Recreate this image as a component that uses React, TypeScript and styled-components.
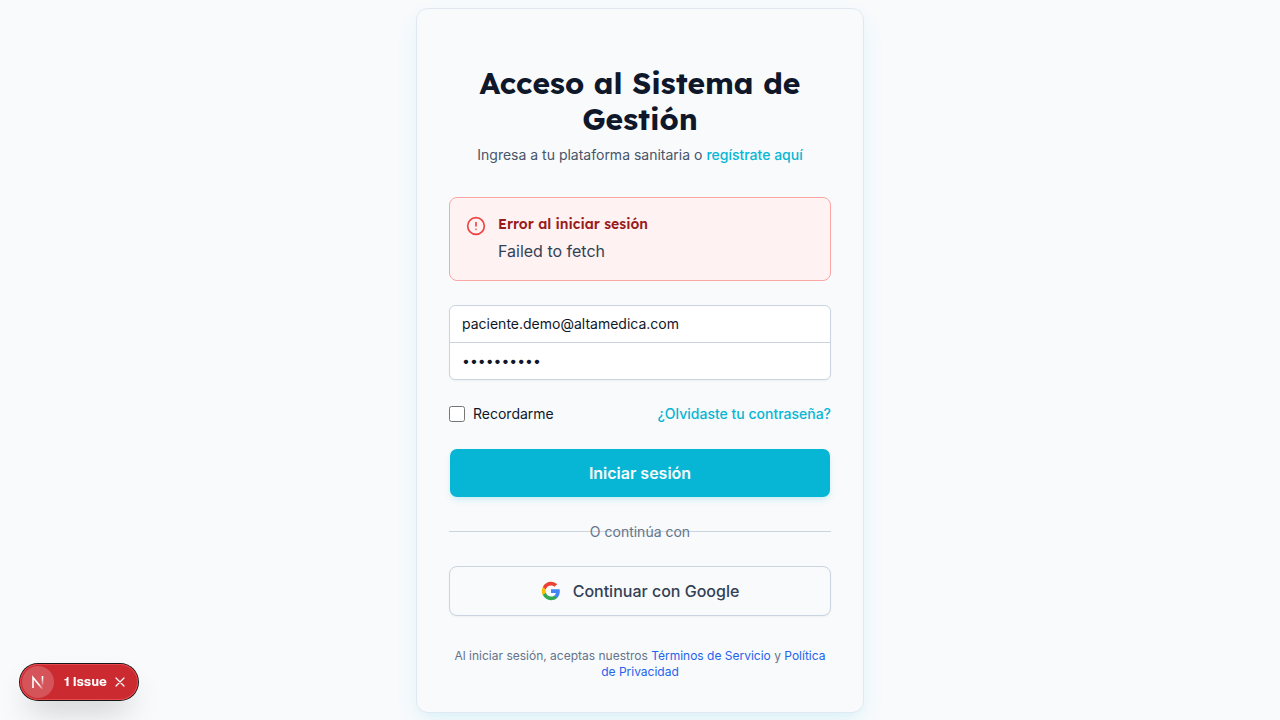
import React from "react";
import styled, { createGlobalStyle } from "styled-components";

const GlobalStyle = createGlobalStyle`
  *, *::before, *::after { box-sizing: border-box; }
  body {
    margin: 0;
    background: #f8fafc;
    color: #0f172a;
    font-family: Inter, "Liberation Sans", sans-serif;
    font-size: 16px;
    line-height: 24px;
  }
  h1, h2, p { margin: 0; }
  button, input { font: inherit; color: inherit; }
  svg { display: block; flex: none; }
`;

const Page = styled.main`
  display: flex;
  justify-content: center;
  align-items: flex-start;
  min-height: 100vh;
  padding: 8px 16px 0;
`;

const Card = styled.section`
  width: 100%;
  max-width: 448px;
  padding: 56px 32px 32px;
  border: 1px solid #e2e8f0;
  border-radius: 12px;
  background: #f8fafc;
  box-shadow: 0 10px 25px -3px rgba(6, 182, 212, 0.1), 0 4px 6px -2px rgba(6, 182, 212, 0.05);
`;

const Header = styled.header`
  display: flex;
  flex-direction: column;
  gap: 8px;
  text-align: center;
`;

const Title = styled.h1`
  font-family: Lexend, Inter, sans-serif;
  font-size: 30px;
  font-weight: 700;
  line-height: 36px;
`;

const Subtitle = styled.p`
  font-size: 14px;
  line-height: 20px;
  color: #475569;
`;

const AccentLink = styled.a`
  font-size: 14px;
  line-height: 20px;
  font-weight: 500;
  color: #06b6d4;
  text-decoration: none;
`;

const Form = styled.form`
  display: flex;
  flex-direction: column;
  gap: 24px;
  margin-top: 32px;
`;

const Alert = styled.div`
  display: flex;
  gap: 12px;
  padding: 16px;
  border: 1px solid #fca5a5;
  border-radius: 8px;
  background: #fef2f2;
`;

const AlertIcon = styled.svg`
  margin-top: 2px;
`;

const AlertBody = styled.div`
  display: flex;
  flex-direction: column;
  gap: 4px;
`;

const AlertTitle = styled.h2`
  font-family: Lexend, Inter, sans-serif;
  font-size: 14px;
  font-weight: 600;
  line-height: 20px;
  color: #991b1b;
`;

const AlertText = styled.p`
  line-height: 26px;
  color: #334155;
`;

const Fields = styled.div`
  display: flex;
  flex-direction: column;
  border: 1px solid #cbd5e1;
  border-radius: 6px;
  background: #ffffff;
  box-shadow: 0 1px 2px rgba(0, 0, 0, 0.05);
  overflow: hidden;
`;

const Field = styled.input`
  width: 100%;
  height: 36px;
  padding: 7px 12px 9px;
  border: 0;
  outline: 0;
  background: transparent;
  font-size: 14px;
  line-height: 20px;

  & + & {
    height: 37px;
    border-top: 1px solid #cbd5e1;
  }
`;

const Options = styled.div`
  display: flex;
  align-items: center;
  justify-content: space-between;
`;

const Remember = styled.label`
  display: flex;
  align-items: center;
  gap: 8px;
  font-size: 14px;
  line-height: 20px;
`;

const Checkbox = styled.input`
  width: 16px;
  height: 16px;
  margin: 0;
`;

const Button = styled.button<{ $primary?: boolean }>`
  display: flex;
  align-items: center;
  justify-content: center;
  gap: 12px;
  width: 100%;
  padding: 12px 16px;
  border: 1px solid ${(p) => (p.$primary ? "transparent" : "#cbd5e1")};
  border-radius: 8px;
  background: ${(p) => (p.$primary ? "#06b6d4" : "#f8fafc")};
  background-clip: padding-box;
  color: ${(p) => (p.$primary ? "#f8fafc" : "#334155")};
  font-weight: ${(p) => (p.$primary ? 600 : 500)};
  line-height: 24px;
  box-shadow: ${(p) =>
    p.$primary
      ? "0 4px 6px -1px rgba(6, 182, 212, 0.1), 0 2px 4px -2px rgba(6, 182, 212, 0.1)"
      : "0 1px 2px rgba(0, 0, 0, 0.05)"};
  cursor: pointer;
`;

const Divider = styled.div`
  display: flex;
  justify-content: center;
  background: linear-gradient(#cbd5e1, #cbd5e1) 0 9px / 100% 1px no-repeat;
  font-size: 14px;
  line-height: 20px;
  color: #64748b;
`;

const Legal = styled.p`
  margin-top: 32px;
  text-align: center;
  font-size: 12px;
  line-height: 16px;
  color: #64748b;
`;

const LegalLink = styled.a`
  color: #2563eb;
  text-decoration: none;
`;

const IssueBadge = styled.div`
  position: fixed;
  left: 20px;
  bottom: 20px;
  display: flex;
  align-items: center;
  height: 36px;
  padding: 2px 5px 2px 2px;
  border-radius: 18px;
  background: #ca2a30;
  color: #ffffff;
  box-shadow: 0 0 0 1px #171717, inset 0 0 0 1px #e5484d, 0 16px 32px -8px rgba(0, 0, 0, 0.24);
`;

const BadgeLogo = styled.button`
  display: flex;
  align-items: center;
  justify-content: center;
  width: 32px;
  height: 32px;
  padding: 0;
  border: 0;
  border-radius: 50%;
  background: rgba(255, 255, 255, 0.2);
`;

const BadgeText = styled.button`
  padding: 0 0 0 10px;
  border: 0;
  background: none;
  font-family: Geist, Inter, sans-serif;
  font-size: 13px;
  font-weight: 700;
  line-height: 16px;
`;

const BadgeClose = styled.button`
  display: flex;
  align-items: center;
  justify-content: center;
  width: 26px;
  height: 26px;
  padding: 0;
  border: 0;
  background: none;
`;

export default function App() {
  return (
    <>
      <GlobalStyle />
      <Page>
        <Card>
          <Header>
            <Title>Acceso al Sistema de Gestión</Title>
            <Subtitle>
              Ingresa a tu plataforma sanitaria o <AccentLink href="#registro">regístrate aquí</AccentLink>
            </Subtitle>
          </Header>
          <Form onSubmit={(e) => e.preventDefault()}>
            <Alert role="alert">
              <AlertIcon width="20" height="20" viewBox="0 0 24 24" fill="none" stroke="#ef4444" strokeWidth="2" strokeLinecap="round" aria-hidden="true">
                <circle cx="12" cy="12" r="10" />
                <path d="M12 8v4M12 16h.01" />
              </AlertIcon>
              <AlertBody>
                <AlertTitle>Error al iniciar sesión</AlertTitle>
                <AlertText>Failed to fetch</AlertText>
              </AlertBody>
            </Alert>
            <Fields>
              <Field type="email" aria-label="Email" defaultValue="paciente.demo@altamedica.com" />
              <Field type="password" aria-label="Contraseña" defaultValue="Demo123456" />
            </Fields>
            <Options>
              <Remember>
                <Checkbox type="checkbox" />
                Recordarme
              </Remember>
              <AccentLink href="#recuperar">¿Olvidaste tu contraseña?</AccentLink>
            </Options>
            <Button $primary type="submit">Iniciar sesión</Button>
            <Divider>O continúa con</Divider>
            <Button type="button">
              <svg width="20" height="20" viewBox="0 0 24 24" aria-hidden="true">
                <path fill="#4285F4" d="M22.56 12.25c0-.78-.07-1.53-.2-2.25H12v4.26h5.92c-.26 1.37-1.04 2.53-2.21 3.31v2.77h3.57c2.08-1.92 3.28-4.74 3.28-8.09z" />
                <path fill="#34A853" d="M12 23c2.97 0 5.46-.98 7.28-2.66l-3.57-2.77c-.98.66-2.23 1.06-3.71 1.06-2.86 0-5.29-1.93-6.16-4.53H2.18v2.84C3.99 20.53 7.7 23 12 23z" />
                <path fill="#FBBC05" d="M5.84 14.09c-.22-.66-.35-1.36-.35-2.09s.13-1.43.35-2.09V7.07H2.18C1.43 8.55 1 10.22 1 12s.43 3.45 1.18 4.93l3.66-2.84z" />
                <path fill="#EA4335" d="M12 5.38c1.62 0 3.06.56 4.21 1.64l3.15-3.15C17.45 2.09 14.97 1 12 1 7.7 1 3.99 3.47 2.18 7.07l3.66 2.84c.87-2.6 3.3-4.53 6.16-4.53z" />
              </svg>
              Continuar con Google
            </Button>
          </Form>
          <Legal>
            Al iniciar sesión, aceptas nuestros <LegalLink href="#terminos">Términos de Servicio</LegalLink> y{" "}
            <LegalLink href="#privacidad">Política de Privacidad</LegalLink>
          </Legal>
        </Card>
      </Page>
      <IssueBadge>
        <BadgeLogo type="button" aria-label="Next.js">
          <svg width="14" height="14" viewBox="0 0 14 14" fill="none" aria-hidden="true">
            <defs>
              <linearGradient id="n-diagonal" x1="8" y1="9" x2="13" y2="14" gradientUnits="userSpaceOnUse">
                <stop stopColor="#fff" />
                <stop offset="1" stopColor="#fff" stopOpacity="0" />
              </linearGradient>
              <linearGradient id="n-stem" x1="12" y1="3" x2="12" y2="11" gradientUnits="userSpaceOnUse">
                <stop stopColor="#fff" />
                <stop offset="1" stopColor="#fff" stopOpacity="0" />
              </linearGradient>
            </defs>
            <path d="M2 13V2.5L11.5 14" stroke="url(#n-diagonal)" strokeWidth="1.6" />
            <path d="M11.5 1v9.5" stroke="url(#n-stem)" strokeWidth="1.6" />
          </svg>
        </BadgeLogo>
        <BadgeText type="button">1 Issue</BadgeText>
        <BadgeClose type="button" aria-label="Cerrar">
          <svg width="10" height="10" viewBox="0 0 10 10" stroke="#fff" strokeWidth="1.2" strokeLinecap="round" aria-hidden="true">
            <path d="M1 1l8 8M9 1L1 9" />
          </svg>
        </BadgeClose>
      </IssueBadge>
    </>
  );
}
